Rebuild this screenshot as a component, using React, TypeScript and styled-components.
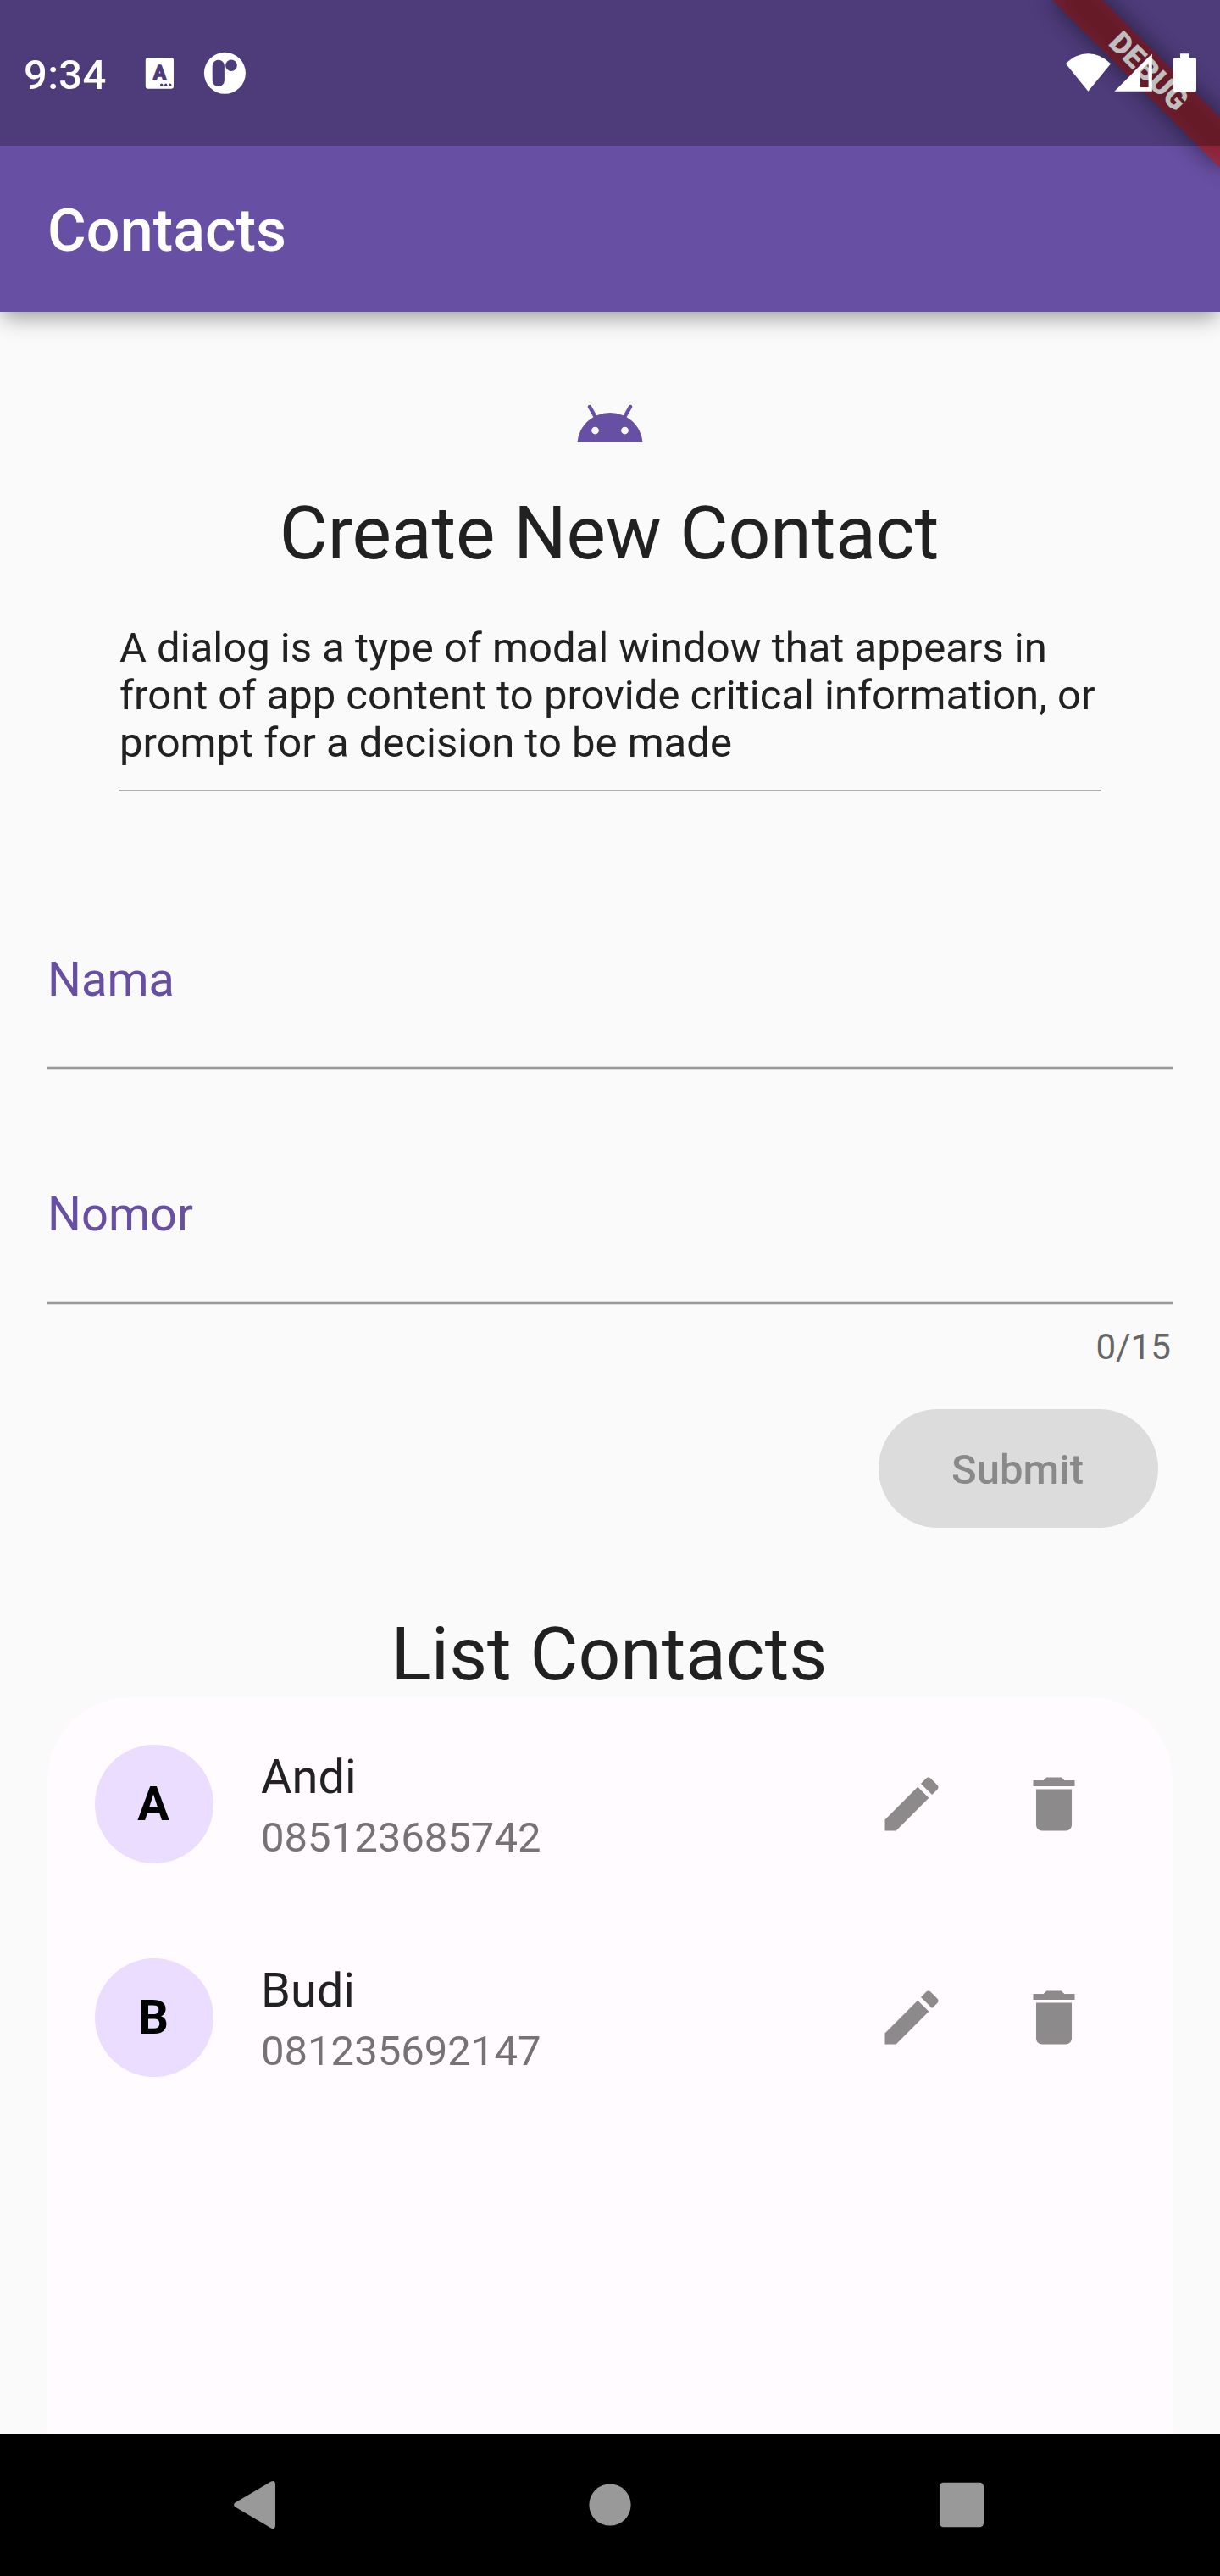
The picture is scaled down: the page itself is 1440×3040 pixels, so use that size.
import React from "react";
import styled, { createGlobalStyle } from "styled-components";

const GlobalStyle = createGlobalStyle`
  *, *::before, *::after { box-sizing: border-box; }
  body { margin: 0; background: #fafafa; font-family: Roboto, "Liberation Sans", sans-serif; color: #212121; }
  h1, h2, p { margin: 0; font-weight: 400; }
`;

const Screen = styled.div`
  position: relative;
  display: flex;
  flex-direction: column;
  width: 1440px;
  height: 3040px;
  overflow: hidden;
  background: #fafafa;
`;

const Header = styled.header`
  display: flex;
  flex-direction: column;
  flex: none;
  height: 368px;
  background: #674fa3;
  box-shadow: 0 10px 24px -3px rgba(0, 0, 0, 0.38);
`;

const StatusBar = styled.div`
  position: relative;
  z-index: 2;
  display: flex;
  justify-content: space-between;
  height: 172px;
  background: rgba(0, 0, 0, 0.25);
`;

const Clock = styled.span`
  margin: 60px 0 0 28px;
  width: 112px;
  font-size: 49px;
  line-height: 57px;
  font-weight: 500;
  letter-spacing: 0.3px;
  color: #fff;
`;

const StatusLeft = styled.div`
  display: flex;
  align-items: flex-start;
`;

const StatusIcons = styled.svg`
  display: block;
  flex: none;
`;

const TitleBar = styled.div`
  display: flex;
  align-items: center;
  height: 196px;
  padding: 4px 56px 0;
`;

const AppTitle = styled.h1`
  font-size: 70px;
  line-height: 82px;
  font-weight: 500;
  letter-spacing: 0.12px;
  color: #fff;
`;

const BannerClip = styled.div`
  position: absolute;
  z-index: 1;
  top: 0;
  right: 0;
  width: 320px;
  height: 320px;
  overflow: hidden;
  pointer-events: none;
`;

const Banner = styled.div`
  position: absolute;
  left: 100%;
  top: 0;
  width: 280px;
  height: 42px;
  transform-origin: 0 0;
  transform: rotate(45deg) translate(-140px, 98px);

  &::before {
    content: "";
    position: absolute;
    inset: 0;
    background: rgba(0, 0, 0, 0.5);
    filter: blur(13.9px);
  }
`;

const BannerLabel = styled.div`
  position: relative;
  height: 42px;
  background: rgba(183, 28, 28, 0.627);
  color: #fff;
  font-size: 35.7px;
  line-height: 42px;
  font-weight: 900;
  text-align: center;
`;

const Content = styled.main`
  display: flex;
  flex-direction: column;
  flex: 1;
  min-height: 0;
  padding: 91px 56px 0;
`;

const AndroidIcon = styled.svg`
  align-self: center;
  flex: none;
  width: 84px;
  height: 84px;
  fill: #674fa3;
`;

const Heading = styled.h2<{ $top: number }>`
  flex: none;
  margin-top: ${(p) => p.$top}px;
  padding-right: 2px;
  font-size: 87.5px;
  line-height: 102px;
  text-align: center;
`;

const Description = styled.p`
  margin: 57px 84px 0 85px;
  padding-bottom: 27px;
  font-size: 49px;
  line-height: 56px;
  white-space: nowrap;
`;

const Divider = styled.div`
  flex: none;
  margin: 0 84px;
  height: 2px;
  border-top: 1px solid #b0b0b0;
  border-bottom: 1px solid #303030;
`;

const Field = styled.label<{ $top: number }>`
  display: flex;
  flex-direction: column;
  flex: none;
  margin-top: ${(p) => p.$top}px;
  color: #674fa3;
  font-size: 56px;
  line-height: 66px;
`;

const Underline = styled.span`
  margin-top: 69px;
  height: 5px;
  background: #9a9a9a;
  border: solid #dedede;
  border-width: 1px 0;
`;

const Counter = styled.div`
  flex: none;
  margin-top: 25px;
  padding-right: 2px;
  font-size: 42px;
  line-height: 50px;
  letter-spacing: 0.1px;
  text-align: right;
  color: #666;
`;

const SubmitButton = styled.button`
  align-self: flex-end;
  flex: none;
  margin: 48px 17px 0 0;
  width: 330px;
  height: 140px;
  padding: 2px 2px 0 0;
  border: 0;
  border-radius: 70px;
  background: #dcdcdc;
  color: #898989;
  font: 500 49px/57px Roboto, "Liberation Sans", sans-serif;
`;

const ContactCard = styled.section`
  display: flex;
  flex-direction: column;
  flex: 1;
  min-height: 0;
  border-radius: 98px 98px 0 0;
  background: #fffbfe;
`;

const ContactRow = styled.div`
  display: flex;
  align-items: center;
  height: 252px;
  padding: 0 56px;
`;

const Avatar = styled.div`
  display: flex;
  align-items: center;
  justify-content: center;
  width: 140px;
  height: 140px;
  padding-right: 2px;
  border-radius: 50%;
  background: #eaddff;
  color: #000;
  font-size: 56px;
  line-height: 66px;
  font-weight: 700;
`;

const ContactText = styled.div`
  flex: 1;
  margin-left: 56px;
  padding-top: 3px;
`;

const Name = styled.div`
  font-size: 56px;
  line-height: 66px;
`;

const Phone = styled.div`
  margin-top: 10px;
  font-size: 49px;
  line-height: 57px;
  color: #757376;
`;

const IconButton = styled.button`
  display: flex;
  align-items: center;
  justify-content: center;
  width: 168px;
  height: 168px;
  padding: 0;
  border: 0;
  background: none;
`;

const ActionIcon = styled.svg`
  width: 84px;
  height: 84px;
  fill: #8c8a8b;
`;

const NavBar = styled.nav`
  display: flex;
  align-items: center;
  justify-content: space-between;
  flex: none;
  height: 168px;
  padding: 0 263px;
  background: #000;
`;

const NavIcon = styled.svg`
  width: 84px;
  height: 84px;
  fill: #999;
`;

const contacts = [
  { name: "Andi", phone: "085123685742" },
  { name: "Budi", phone: "081235692147" },
];

export default function App() {
  return (
    <Screen>
      <GlobalStyle />
      <Header>
        <StatusBar>
          <StatusLeft>
            <Clock>9:34</Clock>
            <StatusIcons width="180" height="172" viewBox="140 0 180 172">
              <rect x="171.8" y="68" width="33.2" height="36.8" rx="3" fill="#fff" />
              <text
                x="188.5"
                y="94.3"
                textAnchor="middle"
                fontFamily="Roboto, sans-serif"
                fontWeight="700"
                fontSize="23"
                fill="#4d3c7a"
                stroke="#4d3c7a"
                strokeWidth="1.4"
                strokeLinejoin="round"
              >
                A
              </text>
              <g fill="#4d3c7a">
                <circle cx="190.7" cy="100.3" r="1.7" />
                <circle cx="195.7" cy="100.3" r="1.7" />
                <circle cx="200.7" cy="100.3" r="1.7" />
              </g>
              <circle cx="265.4" cy="86.3" r="24.5" fill="#fff" />
              <rect x="250.7" y="70.7" width="14.2" height="31.4" rx="7.1" fill="#4d3c7a" />
              <circle cx="273" cy="77.2" r="6.8" fill="#4d3c7a" />
            </StatusIcons>
          </StatusLeft>
          <StatusIcons width="200" height="172" viewBox="1240 0 200 172" fill="#fff">
            <path d="M1284.4 107.8L1258 75.2Q1270 63.2 1284.4 63.2T1311 75.2Z" />
            <path
              fillRule="evenodd"
              d="M1359.8 63.6V107.8H1315.4ZM1355.6 74L1346 83.6V103H1355.6Z"
            />
            <path d="M1393 63.2h11V68h6q2 0 2 2v36.3q0 2-2 2h-23q-2 0-2-2V70q0-2 2-2h6z" />
          </StatusIcons>
        </StatusBar>
        <TitleBar>
          <AppTitle>Contacts</AppTitle>
        </TitleBar>
      </Header>
      <BannerClip>
        <Banner>
          <BannerLabel>DEBUG</BannerLabel>
        </Banner>
      </BannerClip>

      <Content>
        <AndroidIcon viewBox="0 0 24 24">
          <path d="M17.6 9.48l1.84-3.18c.16-.31.04-.69-.26-.85-.29-.15-.65-.06-.83.22l-1.88 3.24a11.5 11.5 0 0 0-8.94 0L5.65 5.67a.643.643 0 0 0-.87-.2c-.28.18-.37.54-.22.83L6.4 9.48A10.78 10.78 0 0 0 1 18h22a10.78 10.78 0 0 0-5.4-8.52zM7 15.25a1.25 1.25 0 1 1 0-2.5 1.25 1.25 0 0 1 0 2.5zm10 0a1.25 1.25 0 1 1 0-2.5 1.25 1.25 0 0 1 0 2.5z" />
        </AndroidIcon>
        <Heading $top={35}>Create New Contact</Heading>
        <Description>
          A dialog is a type of modal window that appears in
          <br />
          front of app content to provide critical information, or
          <br />
          prompt for a decision to be made
        </Description>
        <Divider />
        <Field $top={189}>
          Nama
          <Underline />
        </Field>
        <Field $top={137}>
          Nomor
          <Underline />
        </Field>
        <Counter>0/15</Counter>
        <SubmitButton disabled>Submit</SubmitButton>
        <Heading $top={98}>List Contacts</Heading>
        <ContactCard>
          {contacts.map((c) => (
            <ContactRow key={c.phone}>
              <Avatar>{c.name[0]}</Avatar>
              <ContactText>
                <Name>{c.name}</Name>
                <Phone>{c.phone}</Phone>
              </ContactText>
              <IconButton aria-label="Edit">
                <ActionIcon viewBox="0 0 24 24">
                  <path d="M3 17.25V21h3.75L17.81 9.94l-3.75-3.75L3 17.25zM20.71 7.04c.39-.39.39-1.02 0-1.41l-2.34-2.34c-.39-.39-1.02-.39-1.41 0l-1.83 1.83 3.75 3.75 1.83-1.83z" />
                </ActionIcon>
              </IconButton>
              <IconButton aria-label="Delete">
                <ActionIcon viewBox="0 0 24 24">
                  <path d="M6 19c0 1.1.9 2 2 2h8c1.1 0 2-.9 2-2V7H6v12zM19 4h-3.5l-1-1h-5l-1 1H5v2h14V4z" />
                </ActionIcon>
              </IconButton>
            </ContactRow>
          ))}
        </ContactCard>
      </Content>

      <NavBar>
        <NavIcon viewBox="0 0 84 84">
          <path d="M62 18v48q0 5.5-5 3.5L14.5 44.5q-3-2.5 0-5L57 14.5q5-2 5 3.500z" />
        </NavIcon>
        <NavIcon viewBox="0 0 84 84">
          <circle cx="42" cy="42" r="24.6" />
        </NavIcon>
        <NavIcon viewBox="0 0 84 84">
          <rect x="16" y="15.7" width="52" height="52.6" rx="4.5" />
        </NavIcon>
      </NavBar>
    </Screen>
  );
}
